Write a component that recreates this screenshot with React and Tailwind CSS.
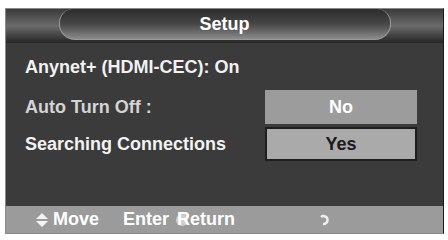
export default function App() {
  return (
    <div className="w-[448px] h-[240px] bg-white pt-[8px] pl-[5px]" style={{ fontFamily: '"Liberation Sans", Arial, sans-serif' }}>
      <div className="w-[439px] h-[226px] bg-[#3b3b3b] border border-[#8a8a8a] border-r-[#1a1a1a] flex flex-col">
        {/* header */}
        <div className="h-[34px] bg-gradient-to-b from-[#3a3a3a] via-[#6c6c6c] to-[#262626] flex items-start justify-center">
          <div className="w-[332px] h-[31px] rounded-b-[16px] rounded-t-[14px] bg-gradient-to-b from-[#2c2c2c] via-[#474747] to-[#8c8c8c] border-x border-b border-[#9a9a9a] flex items-center justify-center">
            <span className="text-white font-bold text-[18px]">Setup</span>
          </div>
        </div>
        {/* body */}
        <div className="flex-1 flex flex-col pl-[19px] pr-[26px] pt-[13px]">
          <div className="text-[#f2f2f2] font-bold text-[18px] leading-[22px]">Anynet+ (HDMI-CEC): On</div>
          <div className="flex items-center justify-between mt-[12px]">
            <span className="text-[#d4d4d4] font-bold text-[18px]">Auto Turn Off :</span>
            <div className="w-[152px] h-[34px] bg-[#9c9c9c] flex items-center justify-center text-white font-bold text-[18px]">No</div>
          </div>
          <div className="flex items-center justify-between mt-[3px]">
            <span className="text-[#f2f2f2] font-bold text-[18px]">Searching Connections</span>
            <div className="w-[152px] h-[34px] bg-[#aaaaaa] border-2 border-[#1e1e1e] flex items-center justify-center text-[#1a1a1a] font-bold text-[18px]">Yes</div>
          </div>
        </div>
        {/* footer */}
        <div className="h-[27px] bg-[#9b9b9b] flex items-center text-white font-bold text-[18px]">
          <div className="flex items-center ml-[30px] gap-[5px]">
            <svg width="12" height="14" viewBox="0 0 12 14">
              <path d="M6 0 L12 6 H0 Z M0 8 H12 L6 14 Z" fill="#f4f4f4" />
            </svg>
            <span>Move</span>
          </div>
          <span className="ml-[24px]">Enter</span>
          <span className="ml-[8px] relative">
            <span className="absolute left-[-1px] top-[8px] w-[12px] h-[12px] rounded-full bg-[#e6e6e6] opacity-70" />
            <span className="relative">Return</span>
          </span>
          <svg className="ml-[84px]" width="12" height="14" viewBox="0 0 12 14">
            <path d="M2 4 A4 4 0 1 1 4 11" stroke="#f0f0f0" strokeWidth="2.5" fill="none" />
          </svg>
        </div>
      </div>
    </div>
  )
}
